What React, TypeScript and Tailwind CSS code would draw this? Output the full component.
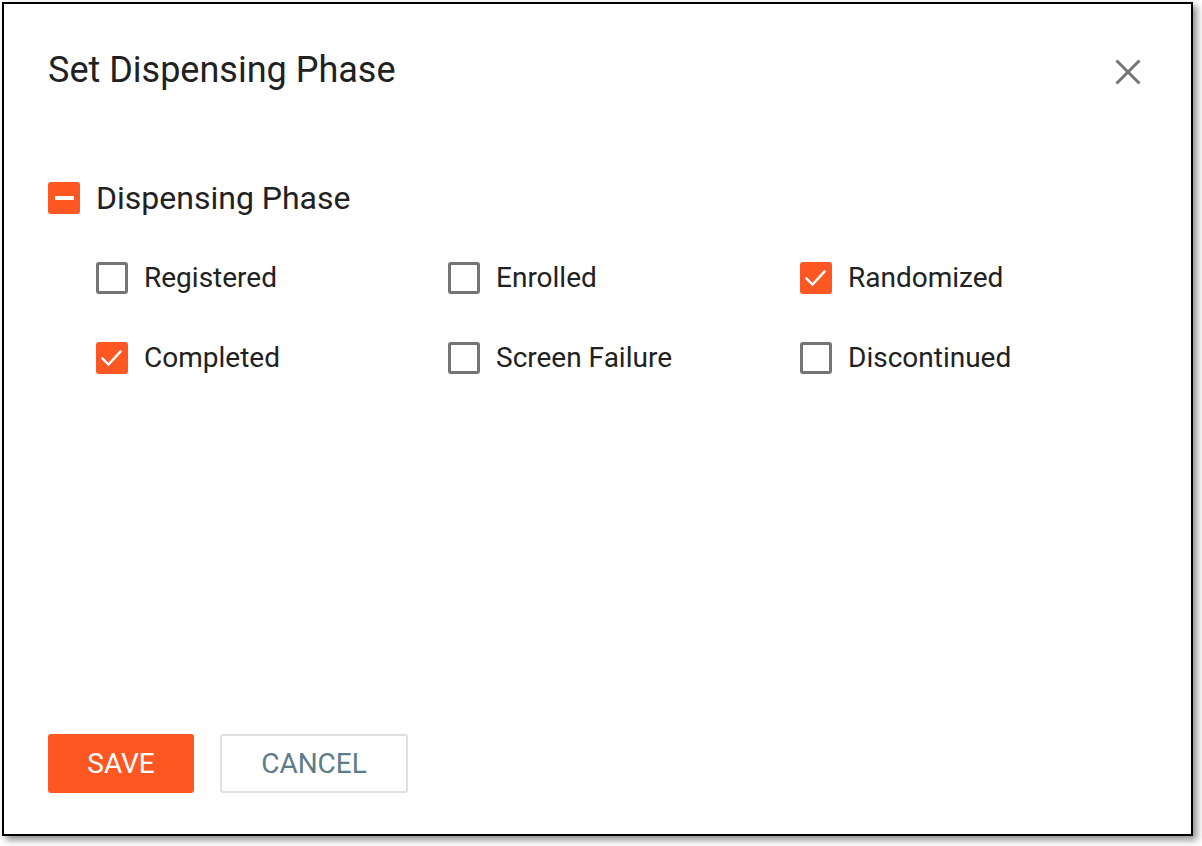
import React from "react";

const ORANGE = "bg-[#ff5722]";

function Box({ checked }: { checked: boolean }) {
  if (checked) {
    return (
      <div className={`w-[32px] h-[32px] rounded-[3px] ${ORANGE} flex items-center justify-center shrink-0`}>
        <svg width="32" height="32" viewBox="0 0 32 32">
          <path d="M6.5 16.5 L12.5 22.5 L24.5 9.5" fill="none" stroke="#fff" strokeWidth="2.4" strokeLinecap="square" strokeLinejoin="miter" />
        </svg>
      </div>
    );
  }
  return <div className="w-[32px] h-[32px] rounded-[3px] border-[3px] border-[#757575] bg-white shrink-0" />;
}

const items: { label: string; checked: boolean }[] = [
  { label: "Registered", checked: false },
  { label: "Enrolled", checked: false },
  { label: "Randomized", checked: true },
  { label: "Completed", checked: true },
  { label: "Screen Failure", checked: false },
  { label: "Discontinued", checked: false },
];

export default function App() {
  return (
    <div className="w-[1202px] h-[846px] bg-white p-[2px] font-['Roboto',sans-serif] text-[#212121]">
      <div className="w-[1191px] h-[834px] border-2 border-black bg-white shadow-[4px_4px_7px_rgba(0,0,0,0.45)] flex flex-col">
        <div className="flex items-center justify-between pl-[44px] pr-[50px] pt-[44px] h-[88px]">
          <h1 className="text-[36px] leading-[44px] font-normal">Set Dispensing Phase</h1>
          <svg width="26" height="26" viewBox="0 0 26 26" className="mt-[4px]">
            <path d="M1.5 1.5 L24.5 24.5 M24.5 1.5 L1.5 24.5" stroke="#757575" strokeWidth="3" fill="none" />
          </svg>
        </div>
        <div className="pl-[44px] mt-[90px] flex items-center gap-[16px] h-[32px]">
          <div className={`w-[32px] h-[32px] rounded-[3px] ${ORANGE} flex items-center justify-center`}>
            <div className="w-[19px] h-[4px] bg-white" />
          </div>
          <span className="text-[32px] leading-[32px]">Dispensing Phase</span>
        </div>
        <div className="pl-[92px] mt-[48px] grid grid-cols-[352px_352px_352px] gap-y-[48px]">
          {items.map((it) => (
            <div key={it.label} className="flex items-center gap-[16px] h-[32px]">
              <Box checked={it.checked} />
              <span className="text-[28px] leading-[32px]">{it.label}</span>
            </div>
          ))}
        </div>
        <div className="mt-auto pl-[44px] pb-[41px] flex gap-[26px]">
          <button className={`w-[146px] h-[59px] rounded-[3px] ${ORANGE} text-white text-[28px] leading-none`}>SAVE</button>
          <button className="w-[188px] h-[59px] rounded-[3px] border-2 border-[#e0e0e0] bg-white text-[#5e7b8a] text-[28px] leading-none">CANCEL</button>
        </div>
      </div>
    </div>
  );
}
